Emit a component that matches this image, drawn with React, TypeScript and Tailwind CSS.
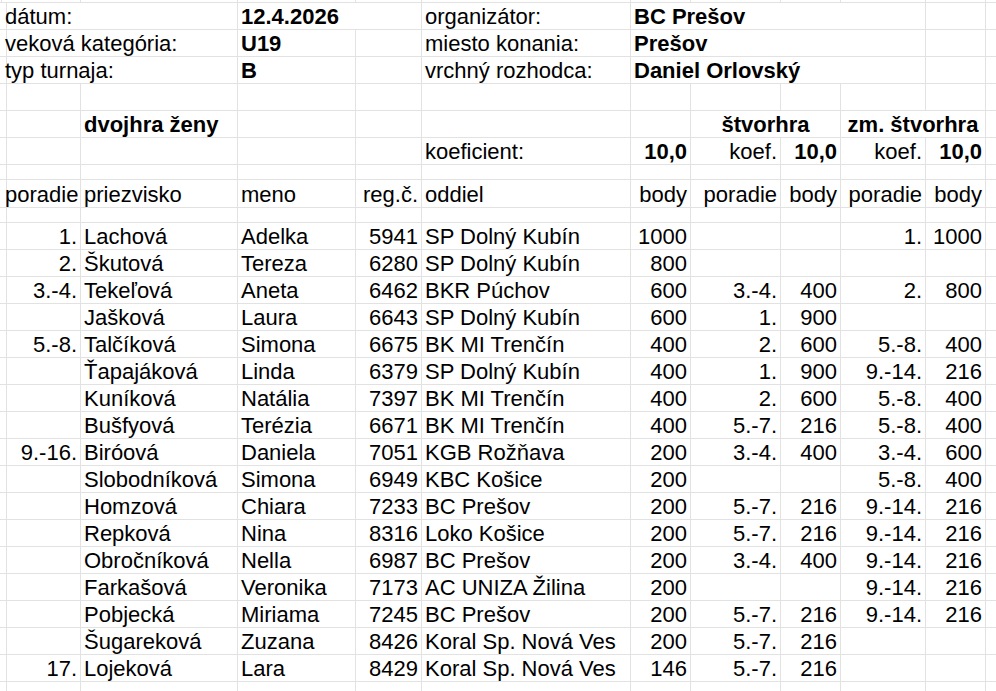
import React from "react";

type Align = "l" | "r" | "c";
type C = { t?: string; a?: Align; b?: boolean; s?: 2 | 4 };

const spanCls: Record<number, string> = { 1: "", 2: "col-span-2", 4: "col-span-4" };

function Cell({ c, last }: { c: C; last?: boolean }) {
  const just = c.a === "r" ? "justify-end" : c.a === "c" ? "justify-center" : "justify-start";
  return (
    <div
      className={[
        "flex items-end overflow-hidden whitespace-nowrap border-b border-[#e2e2e2] px-[3px] pb-[1px] leading-[22px] min-h-0",
        last ? "" : "border-r",
        just,
        c.b ? "font-bold" : "",
        spanCls[c.s ?? 1],
      ].join(" ")}
    >
      {c.t ?? ""}
    </div>
  );
}

function Row({ cells }: { cells: C[] }) {
  return (
    <>
      <Cell c={{}} />
      {cells.map((c, i) => (
        <Cell key={i} c={c} />
      ))}
      <Cell c={{}} last />
    </>
  );
}

const E: C = {};
const emptyRow: C[] = [E, E, E, E, E, E, E, E, E, E];

type D = [string, string, string, string, string, string, string, string, string, string];

const data: D[] = [
  ["1.", "Lachová", "Adelka", "5941", "SP Dolný Kubín", "1000", "", "", "1.", "1000"],
  ["2.", "Škutová", "Tereza", "6280", "SP Dolný Kubín", "800", "", "", "", ""],
  ["3.-4.", "Tekeľová", "Aneta", "6462", "BKR Púchov", "600", "3.-4.", "400", "2.", "800"],
  ["", "Jašková", "Laura", "6643", "SP Dolný Kubín", "600", "1.", "900", "", ""],
  ["5.-8.", "Talčíková", "Simona", "6675", "BK MI Trenčín", "400", "2.", "600", "5.-8.", "400"],
  ["", "Ťapajáková", "Linda", "6379", "SP Dolný Kubín", "400", "1.", "900", "9.-14.", "216"],
  ["", "Kuníková", "Natália", "7397", "BK MI Trenčín", "400", "2.", "600", "5.-8.", "400"],
  ["", "Bušfyová", "Terézia", "6671", "BK MI Trenčín", "400", "5.-7.", "216", "5.-8.", "400"],
  ["9.-16.", "Biróová", "Daniela", "7051", "KGB Rožňava", "200", "3.-4.", "400", "3.-4.", "600"],
  ["", "Slobodníková", "Simona", "6949", "KBC Košice", "200", "", "", "5.-8.", "400"],
  ["", "Homzová", "Chiara", "7233", "BC Prešov", "200", "5.-7.", "216", "9.-14.", "216"],
  ["", "Repková", "Nina", "8316", "Loko Košice", "200", "5.-7.", "216", "9.-14.", "216"],
  ["", "Obročníková", "Nella", "6987", "BC Prešov", "200", "3.-4.", "400", "9.-14.", "216"],
  ["", "Farkašová", "Veronika", "7173", "AC UNIZA Žilina", "200", "", "", "9.-14.", "216"],
  ["", "Pobjecká", "Miriama", "7245", "BC Prešov", "200", "5.-7.", "216", "9.-14.", "216"],
  ["", "Šugareková", "Zuzana", "8426", "Koral Sp. Nová Ves", "200", "5.-7.", "216", "", ""],
  ["17.", "Lojeková", "Lara", "8429", "Koral Sp. Nová Ves", "146", "5.-7.", "216", "", ""],
];

function dataRow(d: D): C[] {
  return [
    { t: d[0], a: "r" },
    { t: d[1] },
    { t: d[2] },
    { t: d[3], a: "r" },
    { t: d[4] },
    { t: d[5], a: "r" },
    { t: d[6], a: "r" },
    { t: d[7], a: "r" },
    { t: d[8], a: "r" },
    { t: d[9], a: "r" },
  ];
}

export default function App() {
  return (
    <div className="h-[691px] w-[996px] overflow-hidden bg-white text-black font-['Liberation_Sans',Arial,sans-serif] text-[22px]">
      <div className="grid grid-cols-[2px_79px_157px_118px_66px_209px_60px_90px_60px_85px_60px_1fr] grid-rows-[3px_repeat(6,27px)_15px_28px_15px_repeat(17,27px)_10px]">
        {Array.from({ length: 12 }).map((_, i) => (
          <div key={i} className={"border-b border-[#e2e2e2] " + (i < 11 ? "border-r" : "")} />
        ))}
        <Row
          cells={[
            { t: "dátum:", s: 2 },
            { t: "12.4.2026", b: true, s: 2 },
            { t: "organizátor:" },
            { t: "BC Prešov", b: true, s: 4 },
            E,
          ]}
        />
        <Row
          cells={[
            { t: "veková kategória:", s: 2 },
            { t: "U19", b: true },
            E,
            { t: "miesto konania:" },
            { t: "Prešov", b: true, s: 4 },
            E,
          ]}
        />
        <Row
          cells={[
            { t: "typ turnaja:", s: 2 },
            { t: "B", b: true },
            E,
            { t: "vrchný rozhodca:" },
            { t: "Daniel Orlovský", b: true, s: 4 },
            E,
          ]}
        />
        <Row cells={emptyRow} />
        <Row
          cells={[
            E,
            { t: "dvojhra ženy", b: true },
            E,
            E,
            E,
            E,
            { t: "štvorhra", b: true, a: "c", s: 2 },
            { t: "zm. štvorhra", b: true, a: "c", s: 2 },
          ]}
        />
        <Row
          cells={[
            E,
            E,
            E,
            E,
            { t: "koeficient:" },
            { t: "10,0", b: true, a: "r" },
            { t: "koef.", a: "r" },
            { t: "10,0", b: true, a: "r" },
            { t: "koef.", a: "r" },
            { t: "10,0", b: true, a: "r" },
          ]}
        />
        <Row cells={emptyRow} />
        <Row
          cells={[
            { t: "poradie" },
            { t: "priezvisko" },
            { t: "meno" },
            { t: "reg.č.", a: "r" },
            { t: "oddiel" },
            { t: "body", a: "r" },
            { t: "poradie", a: "r" },
            { t: "body", a: "r" },
            { t: "poradie", a: "r" },
            { t: "body", a: "r" },
          ]}
        />
        <Row cells={emptyRow} />
        {data.map((d, i) => (
          <Row key={i} cells={dataRow(d)} />
        ))}
        <Row cells={emptyRow} />
      </div>
    </div>
  );
}
